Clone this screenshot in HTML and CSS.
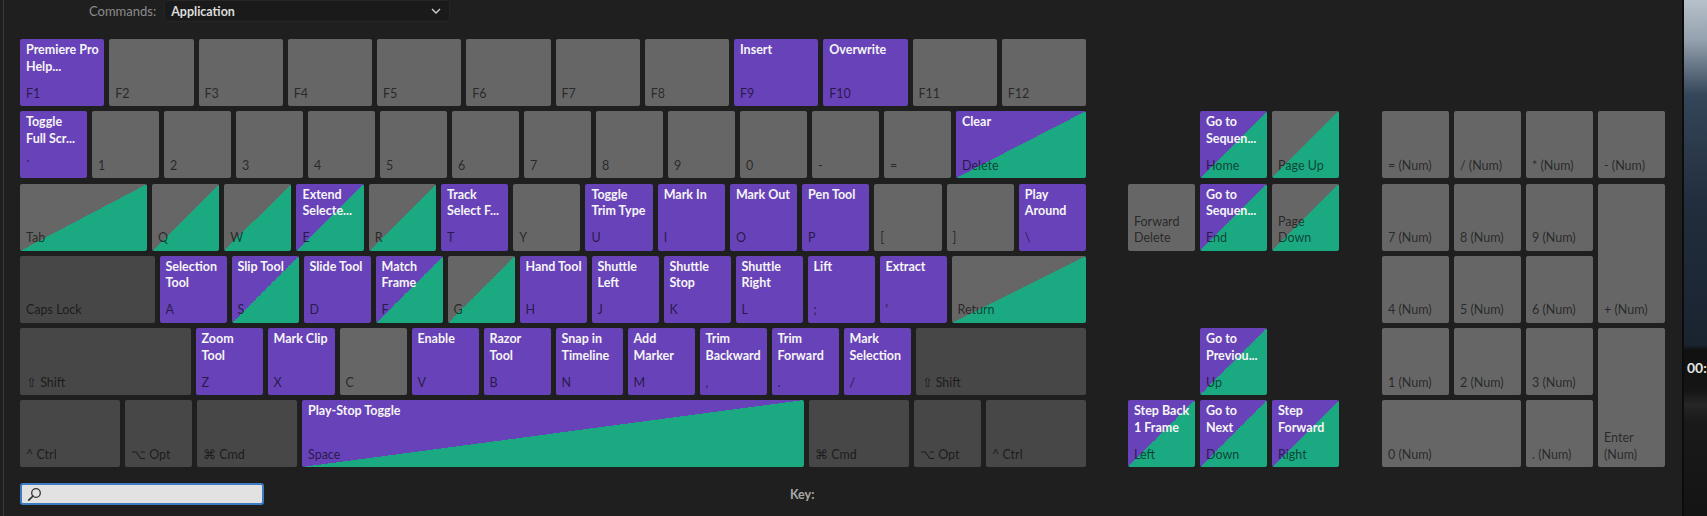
FILE: index.html
```html
<!DOCTYPE html>
<html lang="en">
<head>
  <meta charset="UTF-8">
  <title>Keyboard Shortcuts</title>
  <link rel="stylesheet" href="styles.css">
</head>
<body>

<div class="app">
  <div class="editor">
    <div class="topbar">
      <span class="cmd-label">Commands:</span>
      <div class="select">
        <span>Application</span>
        <svg width="10" height="6" viewBox="0 0 10 6"><path d="M1 1l4 4 4-4" fill="none" stroke="#cfcfcf" stroke-width="1.4"/></svg>
      </div>
    </div>

    <div class="board">
      <div class="main">
        <div class="row">
          <div class="key p"><span class="cmd">Premiere Pro<br>Help...</span><span class="lbl">F1</span></div>
          <div class="key"><span class="lbl">F2</span></div>
          <div class="key"><span class="lbl">F3</span></div>
          <div class="key"><span class="lbl">F4</span></div>
          <div class="key"><span class="lbl">F5</span></div>
          <div class="key"><span class="lbl">F6</span></div>
          <div class="key"><span class="lbl">F7</span></div>
          <div class="key"><span class="lbl">F8</span></div>
          <div class="key p"><span class="cmd">Insert</span><span class="lbl">F9</span></div>
          <div class="key p"><span class="cmd">Overwrite</span><span class="lbl">F10</span></div>
          <div class="key"><span class="lbl">F11</span></div>
          <div class="key"><span class="lbl">F12</span></div>
        </div>

        <div class="row">
          <div class="key u p"><span class="cmd">Toggle<br>Full Scr...</span><span class="lbl">`</span></div>
          <div class="key u"><span class="lbl">1</span></div>
          <div class="key u"><span class="lbl">2</span></div>
          <div class="key u"><span class="lbl">3</span></div>
          <div class="key u"><span class="lbl">4</span></div>
          <div class="key u"><span class="lbl">5</span></div>
          <div class="key u"><span class="lbl">6</span></div>
          <div class="key u"><span class="lbl">7</span></div>
          <div class="key u"><span class="lbl">8</span></div>
          <div class="key u"><span class="lbl">9</span></div>
          <div class="key u"><span class="lbl">0</span></div>
          <div class="key u"><span class="lbl">-</span></div>
          <div class="key u"><span class="lbl">=</span></div>
          <div class="key pg"><span class="cmd">Clear</span><span class="lbl">Delete</span></div>
        </div>

        <div class="row">
          <div class="key tab gg"><span class="lbl">Tab</span></div>
          <div class="key gg"><span class="lbl">Q</span></div>
          <div class="key gg"><span class="lbl">W</span></div>
          <div class="key pg"><span class="cmd">Extend<br>Selecte...</span><span class="lbl">E</span></div>
          <div class="key gg"><span class="lbl">R</span></div>
          <div class="key p"><span class="cmd">Track<br>Select F...</span><span class="lbl">T</span></div>
          <div class="key"><span class="lbl">Y</span></div>
          <div class="key p"><span class="cmd">Toggle<br>Trim Type</span><span class="lbl">U</span></div>
          <div class="key p"><span class="cmd">Mark In</span><span class="lbl">I</span></div>
          <div class="key p"><span class="cmd">Mark Out</span><span class="lbl">O</span></div>
          <div class="key p"><span class="cmd">Pen Tool</span><span class="lbl">P</span></div>
          <div class="key"><span class="lbl">[</span></div>
          <div class="key"><span class="lbl">]</span></div>
          <div class="key p"><span class="cmd">Play<br>Around</span><span class="lbl">\</span></div>
        </div>

        <div class="row">
          <div class="key dk"><span class="lbl">Caps Lock</span></div>
          <div class="key u p"><span class="cmd">Selection<br>Tool</span><span class="lbl">A</span></div>
          <div class="key u pg"><span class="cmd">Slip Tool</span><span class="lbl">S</span></div>
          <div class="key u p"><span class="cmd">Slide Tool</span><span class="lbl">D</span></div>
          <div class="key u pg"><span class="cmd">Match<br>Frame</span><span class="lbl">F</span></div>
          <div class="key u gg"><span class="lbl">G</span></div>
          <div class="key u p"><span class="cmd">Hand Tool</span><span class="lbl">H</span></div>
          <div class="key u p"><span class="cmd">Shuttle<br>Left</span><span class="lbl">J</span></div>
          <div class="key u p"><span class="cmd">Shuttle<br>Stop</span><span class="lbl">K</span></div>
          <div class="key u p"><span class="cmd">Shuttle<br>Right</span><span class="lbl">L</span></div>
          <div class="key u p"><span class="cmd">Lift</span><span class="lbl">;</span></div>
          <div class="key u p"><span class="cmd">Extract</span><span class="lbl">'</span></div>
          <div class="key gg"><span class="lbl">Return</span></div>
        </div>

        <div class="row">
          <div class="key dk"><span class="lbl">⇧ Shift</span></div>
          <div class="key u p"><span class="cmd">Zoom<br>Tool</span><span class="lbl">Z</span></div>
          <div class="key u p"><span class="cmd">Mark Clip</span><span class="lbl">X</span></div>
          <div class="key u"><span class="lbl">C</span></div>
          <div class="key u p"><span class="cmd">Enable</span><span class="lbl">V</span></div>
          <div class="key u p"><span class="cmd">Razor<br>Tool</span><span class="lbl">B</span></div>
          <div class="key u p"><span class="cmd">Snap in<br>Timeline</span><span class="lbl">N</span></div>
          <div class="key u p"><span class="cmd">Add<br>Marker</span><span class="lbl">M</span></div>
          <div class="key u p"><span class="cmd">Trim<br>Backward</span><span class="lbl">,</span></div>
          <div class="key u p"><span class="cmd">Trim<br>Forward</span><span class="lbl">.</span></div>
          <div class="key u p"><span class="cmd">Mark<br>Selection</span><span class="lbl">/</span></div>
          <div class="key dk"><span class="lbl">⇧ Shift</span></div>
        </div>

        <div class="row">
          <div class="key mod dk"><span class="lbl">^ Ctrl</span></div>
          <div class="key u dk"><span class="lbl">⌥ Opt</span></div>
          <div class="key mod dk"><span class="lbl">⌘ Cmd</span></div>
          <div class="key pg"><span class="cmd">Play-Stop Toggle</span><span class="lbl">Space</span></div>
          <div class="key mod dk"><span class="lbl">⌘ Cmd</span></div>
          <div class="key u dk"><span class="lbl">⌥ Opt</span></div>
          <div class="key mod dk"><span class="lbl">^ Ctrl</span></div>
        </div>
      </div>

      <div class="nav">
        <div class="key pg c2 r2"><span class="cmd">Go to<br>Sequen...</span><span class="lbl">Home</span></div>
        <div class="key gg c3 r2"><span class="lbl">Page Up</span></div>
        <div class="key c1 r3"><span class="lbl">Forward<br>Delete</span></div>
        <div class="key pg c2 r3"><span class="cmd">Go to<br>Sequen...</span><span class="lbl">End</span></div>
        <div class="key gg c3 r3"><span class="lbl">Page<br>Down</span></div>
        <div class="key pg c2 r5"><span class="cmd">Go to<br>Previou...</span><span class="lbl">Up</span></div>
        <div class="key pg c1 r6"><span class="cmd">Step Back<br>1 Frame</span><span class="lbl">Left</span></div>
        <div class="key pg c2 r6"><span class="cmd">Go to<br>Next</span><span class="lbl">Down</span></div>
        <div class="key pg c3 r6"><span class="cmd">Step<br>Forward</span><span class="lbl">Right</span></div>
      </div>

      <div class="numpad">
        <div class="key c1 r2"><span class="lbl">= (Num)</span></div>
        <div class="key c2 r2"><span class="lbl">/ (Num)</span></div>
        <div class="key c3 r2"><span class="lbl">* (Num)</span></div>
        <div class="key c4 r2"><span class="lbl">- (Num)</span></div>
        <div class="key c1 r3"><span class="lbl">7 (Num)</span></div>
        <div class="key c2 r3"><span class="lbl">8 (Num)</span></div>
        <div class="key c3 r3"><span class="lbl">9 (Num)</span></div>
        <div class="key c4 r3 tall"><span class="lbl">+ (Num)</span></div>
        <div class="key c1 r4"><span class="lbl">4 (Num)</span></div>
        <div class="key c2 r4"><span class="lbl">5 (Num)</span></div>
        <div class="key c3 r4"><span class="lbl">6 (Num)</span></div>
        <div class="key c1 r5"><span class="lbl">1 (Num)</span></div>
        <div class="key c2 r5"><span class="lbl">2 (Num)</span></div>
        <div class="key c3 r5"><span class="lbl">3 (Num)</span></div>
        <div class="key c4 r5 tall"><span class="lbl">Enter<br>(Num)</span></div>
        <div class="key c1 r6 wide"><span class="lbl">0 (Num)</span></div>
        <div class="key c3 r6"><span class="lbl">. (Num)</span></div>
      </div>
    </div>

    <div class="bottombar">
      <div class="search">
        <svg width="15" height="15" viewBox="0 0 15 15"><circle cx="9" cy="6" r="4.3" fill="none" stroke="#333" stroke-width="1.3"/><path d="M6 9L1.8 13.2" stroke="#333" stroke-width="1.7" stroke-linecap="round"/></svg>
      </div>
      <span class="key-title">Key:</span>
    </div>
  </div>

  <div class="divider"></div>
  <div class="viewer">
    <span class="timecode">00:</span>
  </div>
</div>

</body>
</html>
```

FILE: styles.css
```css
body {
  margin: 0;
  background-color: #1f1f1f;
  font-family: Lato, "Open Sans", sans-serif;
  overflow: hidden;
}

.app {
  display: flex;
  height: 516px;
}

.editor {
  width: 1679px;
  margin-left: 3px;
  padding-left: 16px;
  border-left: 1px solid #3a3a3a;
  box-sizing: border-box;
}

.topbar {
  display: flex;
  align-items: center;
  gap: 8px;
  height: 22px;
  padding-left: 69px;
  margin-bottom: 17px;
}

.cmd-label {
  color: #8c8c8c;
  font-size: 13px;
}

.select {
  width: 286px;
  height: 22px;
  display: flex;
  align-items: center;
  justify-content: space-between;
  padding: 0 8px 0 6px;
  box-sizing: border-box;
  background: #1a1a1a;
  border: 1px solid #252525;
  border-radius: 3px;
  color: #dcdcdc;
  font-size: 12.5px;
  font-weight: 700;
}

.board {
  display: flex;
}

.main {
  width: 1066px;
  display: flex;
  flex-direction: column;
  gap: 5.3px;
}

.row {
  display: flex;
  gap: 5px;
  height: 67px;
}

.key {
  flex: 1;
  min-width: 0;
  display: flex;
  flex-direction: column;
  padding: 3px 2px 4px 6px;
  box-sizing: border-box;
  background: #666666;
  border-radius: 2px;
  overflow: hidden;
  white-space: nowrap;
}

.key.u {
  flex: 0 0 67px;
}

.key.tab {
  flex: 0 0 127px;
}

.key.mod {
  flex: 0 0 100px;
}

.p {
  background: #6842b8;
}

.pg {
  background: linear-gradient(to bottom right, #6842b8 50%, #1ba982 50%);
}

.gg {
  background: linear-gradient(to bottom right, #666666 50%, #1ba982 50%);
}

.key.dk {
  background: #474747;
}

.cmd {
  color: #f5f5f5;
  font-size: 12.5px;
  font-weight: 700;
  line-height: 16.5px;
}

.lbl {
  margin-top: auto;
  color: rgba(0, 0, 0, 0.62);
  font-size: 12.5px;
  line-height: 16.5px;
}

.nav {
  margin-left: 42px;
  display: grid;
  grid-template-columns: repeat(3, 67px);
  grid-template-rows: repeat(6, 67px);
  gap: 5.3px 5px;
}

.numpad {
  margin-left: 43px;
  display: grid;
  grid-template-columns: repeat(4, 67px);
  grid-template-rows: repeat(6, 67px);
  gap: 5.3px 5px;
}

.c1 { grid-column-start: 1; }
.c2 { grid-column-start: 2; }
.c3 { grid-column-start: 3; }
.c4 { grid-column-start: 4; }
.r2 { grid-row-start: 2; }
.r3 { grid-row-start: 3; }
.r4 { grid-row-start: 4; }
.r5 { grid-row-start: 5; }
.r6 { grid-row-start: 6; }
.tall { grid-row-end: span 2; }
.wide { grid-column-end: span 2; }

.bottombar {
  display: flex;
  align-items: center;
  margin-top: 16px;
}

.search {
  width: 244px;
  height: 22px;
  display: flex;
  align-items: center;
  padding-left: 5px;
  box-sizing: border-box;
  background: #e2e2e2;
  border: 2px solid #3d7cc4;
  border-radius: 3px;
}

.key-title {
  margin-left: 526px;
  color: #a8a8a8;
  font-size: 12.5px;
  font-weight: 700;
}

.divider {
  width: 2px;
  background: #0c0c0c;
}

.viewer {
  flex: 1;
  overflow: hidden;
  padding-top: 357px;
  padding-left: 3px;
  background: linear-gradient(180deg, #b7c1cb 0, #94a1ae 40px, #35465a 95px, #222e3d 200px, #1a2330 345px, #101010 350px, #151515 390px, #262626 405px, #1a1a1a 420px, #141414 516px);
}

.timecode {
  color: #e4e4e4;
  font-size: 14px;
  font-weight: 700;
}
```
